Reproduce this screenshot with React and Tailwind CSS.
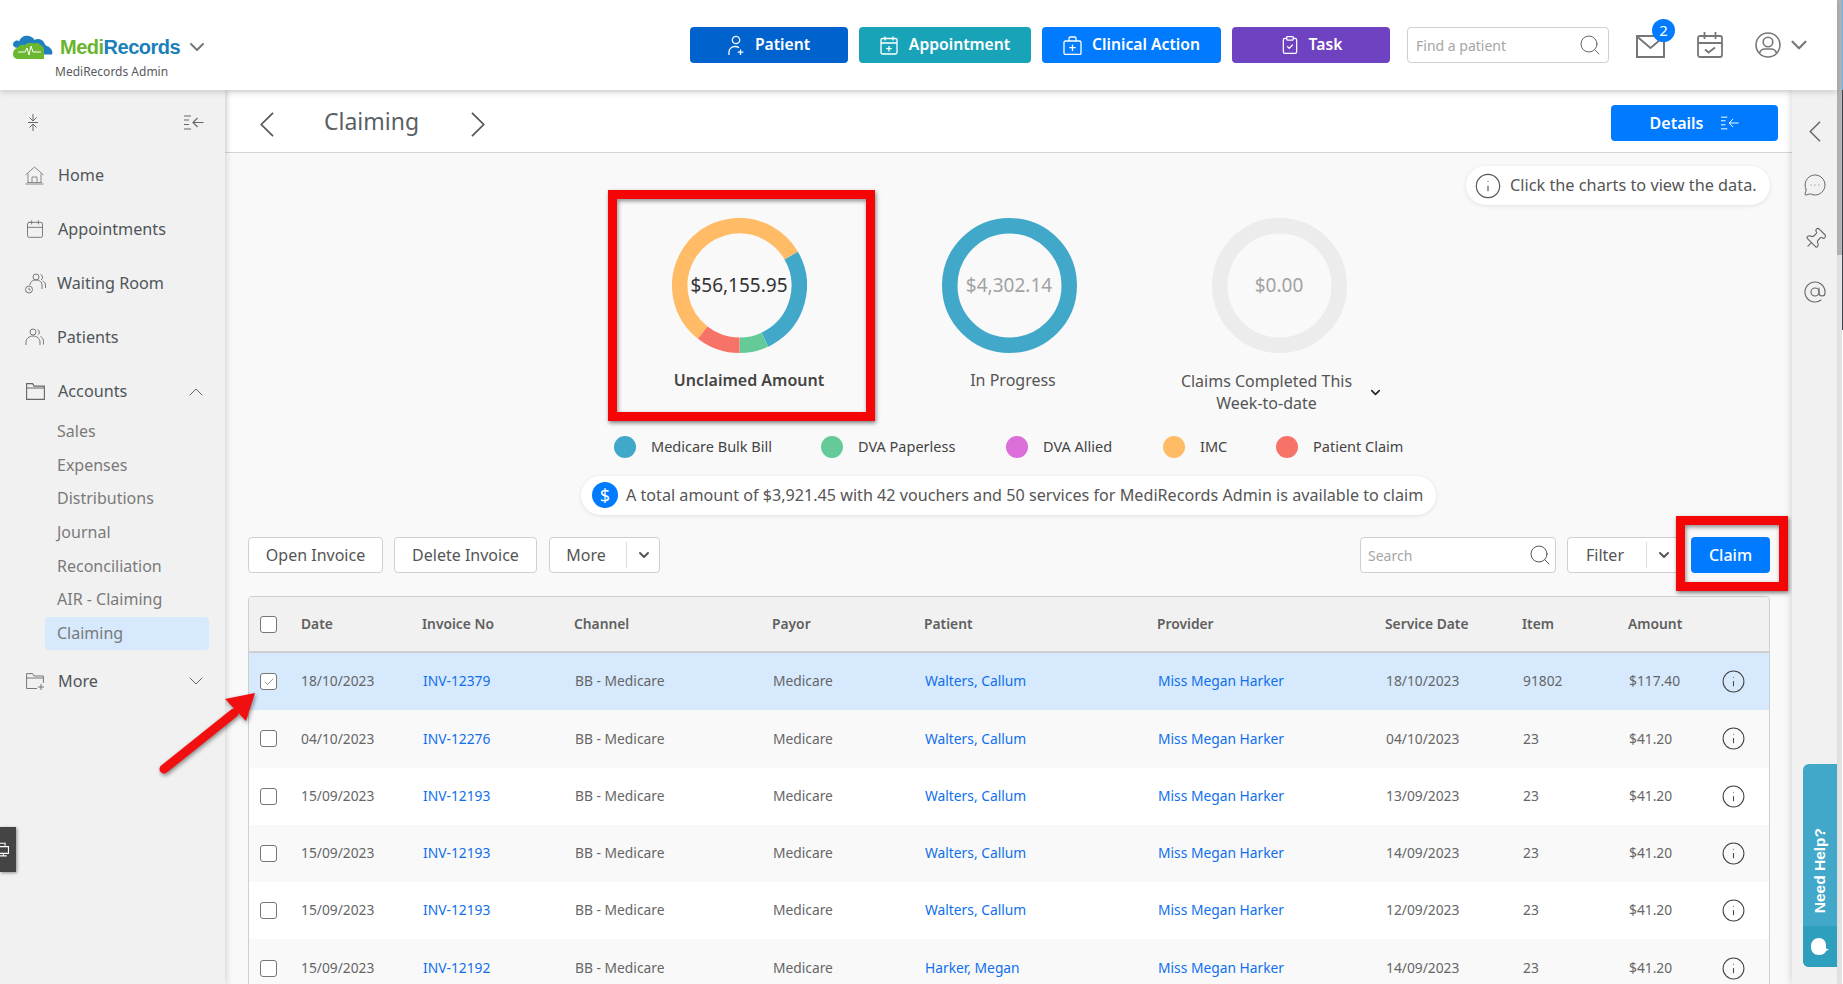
import React from "react";
import { ChevronDown, ChevronUp, Search, Info, ClipboardCheck, MessageCircleMore, Pin, AtSign, Calendar, Check } from "lucide-react";

function Cloud() {
  return (
    <svg width="41" height="24" viewBox="0 0 41 24" className="shrink-0">
      <path d="M6 13C2 13 0 10 1.500 7.500 3 5 6 5 7.500 6 8.500 2 13 0 17 1c3 .7 5 2.500 5.500 4 3-2 8-1 9.500 2.500 1 2 1.500 3 3 3.500 3 1 5 3.500 5.500 6.500l-.5 2H30L6 13z" fill="#1f7fc0" />
      <path d="M5 13c2-3 5-4 8-3 2-2.500 6-3 9-1.500 2-1 5-.5 6.500 1.500 2.500.5 3.500 3 3.500 5.500V24H7c-4 0-6-2-6-5s2-5.500 4-6z" fill="#6ab82f" />
      <path d="M6 17h7l2-4 2 7 2-9 2 6h8" fill="none" stroke="#fff" strokeWidth="1" />
    </svg>
  );
}
function PatientPlus() {
  return (
    <svg width="17" height="21" viewBox="0 0 17 21" fill="none" stroke="currentColor" strokeWidth="1.300" className="shrink-0">
      <circle cx="8" cy="5" r="3.700" />
      <path d="M1 20v-3c0-3 2.500-5.500 6-5.500 1.500 0 3 .4 4 1.200" />
      <path d="M12.500 14.500v5.500M9.700 17.200h5.600" />
    </svg>
  );
}
function CalPlus() {
  return (
    <svg width="18" height="19" viewBox="0 0 18 19" fill="none" stroke="currentColor" strokeWidth="1.300" className="shrink-0">
      <rect x="1" y="2.500" width="16" height="15.500" rx="1.500" />
      <path d="M1 7h16M5 .5v4M13 .5v4M9 10v5.500M6.300 12.700h5.400" />
    </svg>
  );
}
function Bag() {
  return (
    <svg width="19" height="19" viewBox="0 0 19 19" fill="none" stroke="currentColor" strokeWidth="1.300" className="shrink-0">
      <rect x="1" y="5" width="17" height="13.500" rx="1.500" />
      <path d="M6 5V2.200C6 1.500 6.500 1 7.200 1h4.600c.7 0 1.200.5 1.200 1.200V5M9.500 8.500v6.500M6.300 11.700h6.400" />
    </svg>
  );
}
function MailIcon() {
  return (
    <svg width="29" height="23" viewBox="0 0 29 23" fill="none" stroke="#777" strokeWidth="2" className="block">
      <rect x="1" y="1" width="27" height="21" />
      <path d="M1 1.500l13.500 11.500L28 1.500" />
    </svg>
  );
}
function CalCheck() {
  return (
    <svg width="26" height="26" viewBox="0 0 26 26" fill="none" stroke="#777" strokeWidth="1.800" className="shrink-0">
      <rect x="1" y="4" width="24" height="21" rx="2" />
      <path d="M1 11h24M7.500 0v7M18.500 0v7M8 17.500l3.500 3 6.500-5" />
    </svg>
  );
}
function UserCircle() {
  return (
    <svg width="26" height="26" viewBox="0 0 26 26" fill="none" stroke="#777" strokeWidth="1.600" className="shrink-0">
      <circle cx="13" cy="13" r="12" />
      <circle cx="13" cy="10" r="4.800" />
      <path d="M4.500 21c1-3 3.500-4 5.500-4h6c2 0 4.500 1 5.500 4" />
    </svg>
  );
}
function CollapseLeft({ w = 20, h = 15 }) {
  return (
    <svg width={w} height={h} viewBox="0 0 20 15" fill="none" stroke="currentColor" strokeWidth="1.100" className="shrink-0">
      <path d="M0 1h7M0 5h5M0 9.500h5M0 14h7M19.500 7.500H9M13.500 3L9 7.500l4.500 4.500" />
    </svg>
  );
}
function Squeeze() {
  return (
    <svg width="12" height="17" viewBox="0 0 12 17" fill="none" stroke="#666" strokeWidth="1" className="shrink-0">
      <path d="M1 8.500h10M6 0v6.500M2.500 3.500L6 7l3.500-3.500M6 17v-6.500M2.500 13.500L6 10l3.500 3.500" />
    </svg>
  );
}
function HomeIcon() {
  return (
    <svg width="19" height="19" viewBox="0 0 19 19" fill="none" stroke="#8a8a8a" strokeWidth="1" className="shrink-0">
      <path d="M0.500 9L9.500 1l9 8M3 7.500V16.500M16 7.500V16.500M7 16.500V11h5v5.500M0.500 18h18M2 16.500h15" />
    </svg>
  );
}
function Waiting() {
  return (
    <svg width="21" height="21" viewBox="0 0 21 21" fill="none" stroke="#777" strokeWidth="1" className="shrink-0">
      <circle cx="11" cy="4" r="3" />
      <path d="M5 12c0-3 2.500-5 6-5s6 2 6 5v4" />
      <path d="M15.500 1.500a3 3 0 0 1 .5 5.500M17.500 8c2 .7 3 2.500 3 4v3" />
      <circle cx="4" cy="16.500" r="3.500" />
      <path d="M4 14.800v2h1.500" />
    </svg>
  );
}
function People() {
  return (
    <svg width="19" height="18" viewBox="0 0 19 18" fill="none" stroke="#777" strokeWidth="1" className="shrink-0">
      <circle cx="8" cy="4" r="3" />
      <path d="M1 17v-3c0-3 3-6 7-6s7 3 7 6v3" />
      <path d="M12.500 1.500a3 3 0 0 1 .5 5.300M15.500 8.500c2 1 3 3 3 5v3" />
    </svg>
  );
}
function FolderIcon() {
  return (
    <svg width="19" height="17" viewBox="0 0 19 17" fill="none" stroke="#666" strokeWidth="1.100" className="shrink-0">
      <path d="M.6 16.400V.6h6l1.500 2.500h10.300v13.300zM.6 5h17.800" />
    </svg>
  );
}
function FolderPlusIcon() {
  return (
    <svg width="19" height="17" viewBox="0 0 19 17" fill="none" stroke="#777" strokeWidth="1" className="shrink-0">
      <path d="M11 15.500H.6V.6h6L8 3h9.400v7M.6 5h16.800M15 11v6M12 14h6" />
    </svg>
  );
}
function BigLeft({ w = 14, h = 25, className = "" }) {
  return (
    <svg width={w} height={h} viewBox="0 0 14 25" fill="none" stroke="currentColor" strokeWidth="1.700" className={"shrink-0 " + className}>
      <path d="M13 .8L1.300 12.500 13 24.200" />
    </svg>
  );
}
function BigRight({ className = "" }) {
  return (
    <svg width="14" height="25" viewBox="0 0 14 25" fill="none" stroke="currentColor" strokeWidth="1.700" className={"shrink-0 " + className}>
      <path d="M1 .8l11.700 11.700L1 24.200" />
    </svg>
  );
}
function Checkbox({ on }) {
  return (
    <span className="flex h-[17px] w-[17px] items-center justify-center rounded-[3px] border border-[#767676] bg-white">
      {on && <Check size={12} strokeWidth={1.200} className="text-[#555]" />}
    </span>
  );
}

function Donut({ segs, text, muted }) {
  return (
    <div className="grid h-[135px] w-[135px] place-items-center">
      <svg width="135" height="135" viewBox="0 0 135 135" className="[grid-area:1/1]">
        {segs.map((s, i) => (
          <circle key={i} cx="67.500" cy="67.500" r="59.750" fill="none" stroke={s.c} strokeWidth="15.500" pathLength="360" strokeDasharray={`${s.len} 360`} transform={`rotate(${s.from - 90} 67.500 67.500)`} />
        ))}
      </svg>
      <span className={"[grid-area:1/1] text-[19px] " + (muted ? "text-[#a3a3a3]" : "text-[#333]")}>{text}</span>
    </div>
  );
}

const NAV_TOP = [
  ["Home", <HomeIcon />, "ml-[14px]"],
  ["Appointments", <Calendar size={20} strokeWidth={1} className="shrink-0 text-[#666]" />, "ml-[13px]"],
  ["Waiting Room", <Waiting />, "ml-[11px]"],
  ["Patients", <People />, "ml-[13px]"],
];
const SUBS = ["Sales", "Expenses", "Distributions", "Journal", "Reconciliation", "AIR - Claiming"];
const LEGEND = [
  ["Medicare Bulk Bill", "bg-[#41a8c9]", "w-[207px]"],
  ["DVA Paperless", "bg-[#64cb98]", "w-[185px]"],
  ["DVA Allied", "bg-[#db6ed8]", "w-[157px]"],
  ["IMC", "bg-[#ffbb66]", "w-[113px]"],
  ["Patient Claim", "bg-[#f77367]", ""],
];
const COLS = "grid grid-cols-[52px_121px_152px_198px_152px_233px_228px_137px_106px_95px_1fr] items-center";
const HEAD = ["Date", "Invoice No", "Channel", "Payor", "Patient", "Provider", "Service Date", "Item", "Amount"];
const W = "Walters, Callum";
const ROWS = [
  ["18/10/2023", "INV-12379", W, "18/10/2023", "91802", "$117.40", "bg-[#d6e9fd]", true],
  ["04/10/2023", "INV-12276", W, "04/10/2023", "23", "$41.20", "bg-[#f9f9f9]"],
  ["15/09/2023", "INV-12193", W, "13/09/2023", "23", "$41.20", "bg-white"],
  ["15/09/2023", "INV-12193", W, "14/09/2023", "23", "$41.20", "bg-[#f9f9f9]"],
  ["15/09/2023", "INV-12193", W, "12/09/2023", "23", "$41.20", "bg-white"],
  ["15/09/2023", "INV-12192", "Harker, Megan", "14/09/2023", "23", "$41.20", "bg-[#f9f9f9]"],
];

export default function App() {
  return (
    <div className="relative flex h-[984px] w-[1843px] overflow-hidden bg-white font-['Noto_Sans',sans-serif] text-[#555]">
      <div className="flex min-w-0 flex-1 flex-col">
        <header className="relative z-20 flex h-[90px] shrink-0 items-center bg-white shadow-[0_2px_6px_rgba(0,0,0,0.16)]">
          <div className="w-[690px] shrink-0 pl-[12px] pt-[24px]">
            <div className="flex items-center">
              <Cloud />
              <span className="ml-[7px] font-['Liberation_Sans',sans-serif] text-[20px] leading-[26px] font-bold tracking-[-0.5px]">
                <span className="text-[#69b52f]">Medi</span>
                <span className="text-[#1b7fb9]">Records</span>
              </span>
              <ChevronDown size={24} strokeWidth={2} className="ml-[5px] text-[#777]" />
            </div>
            <div className="mt-[4px] pl-[43px] text-[12px] leading-[16px] text-[#5a5a5a]">MediRecords Admin</div>
          </div>
          <div className="flex items-center gap-[11px] text-[15.700px]">
            <button className="flex h-[36px] w-[158px] items-center justify-center gap-[10px] rounded-[4px] bg-[#0062cc] font-semibold text-white"><PatientPlus />Patient</button>
            <button className="flex h-[36px] w-[172px] items-center justify-center gap-[11px] rounded-[4px] bg-[#18a3b8] font-semibold text-white"><CalPlus />Appointment</button>
            <button className="flex h-[36px] w-[179px] items-center justify-center gap-[10px] rounded-[4px] bg-[#007bff] font-semibold text-white"><Bag />Clinical Action</button>
            <button className="flex h-[36px] w-[158px] items-center justify-center gap-[9px] rounded-[4px] bg-[#6f42c1] font-semibold text-white"><ClipboardCheck size={20} strokeWidth={1.500} />Task</button>
          </div>
          <div className="ml-[17px] flex h-[36px] w-[202px] items-center justify-between rounded-[4px] border border-[#cfcfcf] pl-[8px] pr-[6px] text-[14px] text-[#a5a5a5]">
            Find a patient
            <Search size={24} strokeWidth={1} className="text-[#666]" />
          </div>
          <div className="relative ml-[27px] mt-[2px] h-[23px] w-[29px]">
            <MailIcon />
            <span className="absolute left-[16px] top-[-16px] flex h-[23px] w-[23px] items-center justify-center rounded-full bg-[#007bff] text-[15px] text-white">2</span>
          </div>
          <div className="ml-[32px]"><CalCheck /></div>
          <div className="ml-[32px]"><UserCircle /></div>
          <ChevronDown size={26} strokeWidth={2} className="ml-[5px] text-[#777]" />
        </header>

        <div className="flex min-h-0 flex-1">
          <aside className="relative z-10 w-[225px] shrink-0 bg-[#f1f1f1] shadow-[2px_0_6px_rgba(0,0,0,0.14)]">
            <div className="flex h-[58px] items-center justify-between pl-[27px] pr-[21px] pt-[6px] text-[#666]">
              <Squeeze />
              <CollapseLeft />
            </div>
            {NAV_TOP.map(([label, icon, ml]) => (
              <div key={label} className="flex h-[54px] items-center pl-[25px] text-[16.200px] text-[#4f5559]">
                {icon}
                <span className={ml}>{label}</span>
              </div>
            ))}
            <div className="flex h-[51px] items-center justify-between pl-[26px] pr-[17px] pt-[4px] text-[16.200px] text-[#4f5559]">
              <span className="flex items-center">
                <FolderIcon />
                <span className="ml-[13px]">Accounts</span>
              </span>
              <ChevronUp size={24} strokeWidth={1} className="text-[#666]" />
            </div>
            <div className="pl-[45px] pr-[16px] text-[16px] text-[#7a7a7a]">
              {SUBS.map((s) => (
                <div key={s} className="flex h-[33.700px] items-center pb-[2px] pl-[12px]">{s}</div>
              ))}
              <div className="flex h-[33px] items-center rounded-[4px] bg-[#d6e9fd] pb-[2px] pl-[12px]">Claiming</div>
            </div>
            <div className="mt-[4px] flex h-[54px] items-center justify-between pl-[26px] pr-[17px] text-[16.200px] text-[#4f5559]">
              <span className="flex items-center">
                <FolderPlusIcon />
                <span className="ml-[13px]">More</span>
              </span>
              <ChevronDown size={24} strokeWidth={1} className="text-[#666]" />
            </div>
          </aside>

          <main className="relative min-w-0 flex-1 bg-[#f9f9f9]">
            <div className="flex h-[63px] items-center border-b border-[#d4d4d4] bg-white pl-[35px] pr-[14px] shadow-[inset_3px_3px_6px_-3px_rgba(0,0,0,0.1)]">
              <BigLeft className="mt-[6px] text-[#555]" />
              <span className="ml-[50px] mt-[1px] text-[23px] text-[#5a5f66]">Claiming</span>
              <BigRight className="ml-[52px] mt-[6px] text-[#555]" />
              <button className="ml-auto mt-[3px] flex h-[36px] w-[167px] items-center justify-center gap-[18px] rounded-[4px] bg-[#007bff] text-[16px] font-semibold text-white">
                Details <CollapseLeft w={18} h={14} />
              </button>
            </div>

            <div className="flex">
              <div className="ml-[379px] shrink-0 pt-[64.500px]">
                <div className="flex">
                  <div className="flex w-[270px] flex-col items-center">
                    <Donut text="$56,155.95" segs={[
                      { c: "#ffbb66", from: 218, len: 81 },
                      { c: "#ffbb66", from: 299, len: 121 },
                      { c: "#41a8c9", from: 60, len: 95 },
                      { c: "#64cb98", from: 155, len: 25 },
                      { c: "#f77367", from: 180, len: 38 },
                    ]} />
                    <div className="mt-[16.500px] pl-[20px] text-[16px] leading-[22px] font-semibold text-[#444]">Unclaimed Amount</div>
                  </div>
                  <div className="flex w-[270px] flex-col items-center">
                    <Donut muted text="$4,302.14" segs={[{ c: "#41a8c9", from: 0, len: 360 }]} />
                    <div className="mt-[16.500px] pl-[8px] text-[16px] leading-[22px] text-[#555]">In Progress</div>
                  </div>
                  <div className="flex w-[270px] flex-col items-center">
                    <Donut muted text="$0.00" segs={[{ c: "#ececec", from: 0, len: 360 }]} />
                    <div className="mt-[17.500px] flex items-center pl-[6px] text-center text-[16px] leading-[22px] text-[#555]">
                      <span>Claims Completed This<br />Week-to-date</span>
                      <ChevronDown size={15} strokeWidth={2.500} className="ml-[16px] text-[#222]" />
                    </div>
                  </div>
                </div>
              </div>
              <div className="ml-[52px] mt-[13px] flex h-[39px] w-[304px] items-center self-start rounded-[20px] bg-white pl-[8px] text-[16.300px] text-[#555] shadow-[0_1px_4px_rgba(0,0,0,0.1)]">
                <Info size={28} strokeWidth={1} className="text-[#555]" />
                <span className="ml-[8px] whitespace-nowrap">Click the charts to view the data.</span>
              </div>
            </div>

            <div className="ml-[389px] mt-[22px] flex h-[22px] items-center text-[14.500px] text-[#444]">
              {LEGEND.map(([label, c, w]) => (
                <div key={label} className={"flex items-center " + w}>
                  <span className={"h-[22px] w-[22px] rounded-full " + c} />
                  <span className="ml-[15px]">{label}</span>
                </div>
              ))}
            </div>

            <div className="ml-[356px] mt-[18px] flex h-[39px] w-[855px] items-center rounded-[20px] bg-white pl-[11px] pb-[1px] text-[16.150px] text-[#555] shadow-[0_1px_4px_rgba(0,0,0,0.1)]">
              <span className="flex h-[26px] w-[26px] items-center justify-center rounded-full bg-[#007bff] text-[18px] text-white">$</span>
              <span className="ml-[8px] whitespace-nowrap">A total amount of $3,921.45 with 42 vouchers and 50 services for MediRecords Admin is available to claim</span>
            </div>

            <div className="ml-[23px] mr-[22px] mt-[22px] flex h-[36px] items-center text-[16px] text-[#555]">
              <button className="h-[36px] w-[135px] rounded-[4px] border border-[#cfcfcf] bg-white">Open Invoice</button>
              <button className="ml-[11px] h-[36px] w-[143px] rounded-[4px] border border-[#cfcfcf] bg-white">Delete Invoice</button>
              <div className="ml-[12px] flex h-[36px] w-[111px] items-center rounded-[4px] border border-[#cfcfcf] bg-white">
                <span className="w-[76px] pr-[4px] text-center">More</span>
                <span className="h-[26px] w-px bg-[#ddd]" />
                <ChevronDown size={16} strokeWidth={3} className="ml-[9px] text-[#555]" />
              </div>
              <div className="ml-auto flex h-[36px] w-[196px] items-center justify-between rounded-[4px] border border-[#cfcfcf] bg-white pl-[7px] pr-[3px] text-[14px] text-[#a5a5a5]">
                Search
                <Search size={24} strokeWidth={1} className="text-[#555]" />
              </div>
              <div className="ml-[11px] flex h-[36px] w-[113px] items-center rounded-[4px] border border-[#cfcfcf] bg-white">
                <span className="w-[78px] pr-[4px] text-center">Filter</span>
                <span className="h-[26px] w-px bg-[#ddd]" />
                <ChevronDown size={16} strokeWidth={3} className="ml-[9px] text-[#555]" />
              </div>
              <button className="ml-[11px] h-[36px] w-[79px] rounded-[4px] bg-[#007bff] font-medium text-white">Claim</button>
            </div>

            <div className="ml-[23px] mr-[22px] mt-[23px] overflow-hidden rounded-t-[4px] border border-[#cfcfcf] text-[13.800px] text-[#666]">
              <div className={COLS + " h-[56px] border-b-2 border-[#cfcfcf] bg-[#f1f1f1] font-semibold text-[#5f5f5f]"}>
                <div className="pl-[11px]"><Checkbox /></div>
                {HEAD.map((h) => <div key={h}>{h}</div>)}
              </div>
              {ROWS.map((r, i) => (
                <div key={i} className={COLS + " h-[57.300px] " + r[6]}>
                  <div className="pl-[11px]"><Checkbox on={r[7]} /></div>
                  <div>{r[0]}</div>
                  <div className="pl-px text-[#0f6fec]">{r[1]}</div>
                  <div className="pl-px">BB - Medicare</div>
                  <div className="pl-px">Medicare</div>
                  <div className="pl-px text-[#0f6fec]">{r[2]}</div>
                  <div className="pl-px text-[#0f6fec]">Miss Megan Harker</div>
                  <div className="pl-px">{r[3]}</div>
                  <div className="pl-px">{r[4]}</div>
                  <div className="pl-px">{r[5]}</div>
                  <Info size={25} strokeWidth={1} className="ml-[-2px] text-[#444]" />
                </div>
              ))}
            </div>

            <div className="absolute left-[383px] top-[100px] h-[231px] w-[267px] border-[9px] border-[#f40606] shadow-[1px_2px_4px_rgba(0,0,0,0.5),inset_1px_2px_4px_rgba(0,0,0,0.45)]" />
            <div className="absolute left-[1451px] top-[426px] h-[75px] w-[112px] border-[9px] border-[#f40606] shadow-[1px_2px_4px_rgba(0,0,0,0.5),inset_1px_2px_4px_rgba(0,0,0,0.45)]" />
          </main>

          <div className="relative z-10 flex w-[45px] shrink-0 flex-col items-center bg-[#f1f1f1] text-[#666] shadow-[-2px_0_6px_rgba(0,0,0,0.12)]">
            <BigLeft w={12} h={21} className="mt-[31px]" />
            <MessageCircleMore size={24} strokeWidth={1} className="mt-[31px]" />
            <Pin size={24} strokeWidth={1.100} className="mt-[30px] rotate-45" />
            <AtSign size={24} strokeWidth={1.100} className="mt-[29px]" />
            <div className="absolute bottom-[17px] right-0 flex h-[203px] w-[34px] flex-col overflow-hidden rounded-l-[6px] bg-[#41a8c9] text-white">
              <div className="flex flex-1 items-center justify-center pt-[52px]">
                <span className="-rotate-90 whitespace-nowrap font-['Liberation_Sans',sans-serif] text-[15.500px] font-bold">Need Help?</span>
              </div>
              <div className="flex h-[41px] items-center justify-center bg-[#2e9fbd]">
                <svg width="18" height="18" viewBox="0 0 18 18" fill="#fff">
                  <path d="M8 0c4 0 7 3 7 7v3.500l3 1-3 1.500c-1 2.500-3.500 4-7 4C3 17 0 14 0 8.500 0 3 3.500 0 8 0z" />
                </svg>
              </div>
            </div>
          </div>
        </div>
      </div>

      <div className="flex w-[6px] shrink-0">
        <div className="flex w-[4.500px] flex-col bg-[#e4e4e4]">
          <div className="h-[255px] bg-[#b4b4b4]" />
        </div>
        <div className="flex flex-1 flex-col">
          <div className="h-[90px] bg-[#6fb3e6]" />
          <div className="h-[240px] bg-[#3f4246]" />
          <div className="flex-1 bg-white" />
        </div>
      </div>

      <div className="absolute left-0 top-[827px] z-30 flex h-[45px] w-[16px] items-center justify-end overflow-hidden bg-[#444] shadow-[1px_1px_3px_rgba(0,0,0,0.4)]">
        <svg width="13" height="18" viewBox="0 0 13 18" fill="none" stroke="#fff" strokeWidth="1.300" className="mr-[5px]">
          <path d="M-2 1h8v3M-2 5h12v8H-2M4 13v3M0 16h8" />
        </svg>
      </div>

      <svg width="120" height="100" viewBox="0 0 120 100" className="absolute left-[150px] top-[685px] z-30 drop-shadow-[1px_2px_2px_rgba(0,0,0,0.45)]">
        <path d="M14 84L84 28" stroke="#f20f0f" strokeWidth="9" strokeLinecap="round" />
        <path d="M105 8L75 14 96 36z" fill="#f20f0f" />
      </svg>
    </div>
  );
}
